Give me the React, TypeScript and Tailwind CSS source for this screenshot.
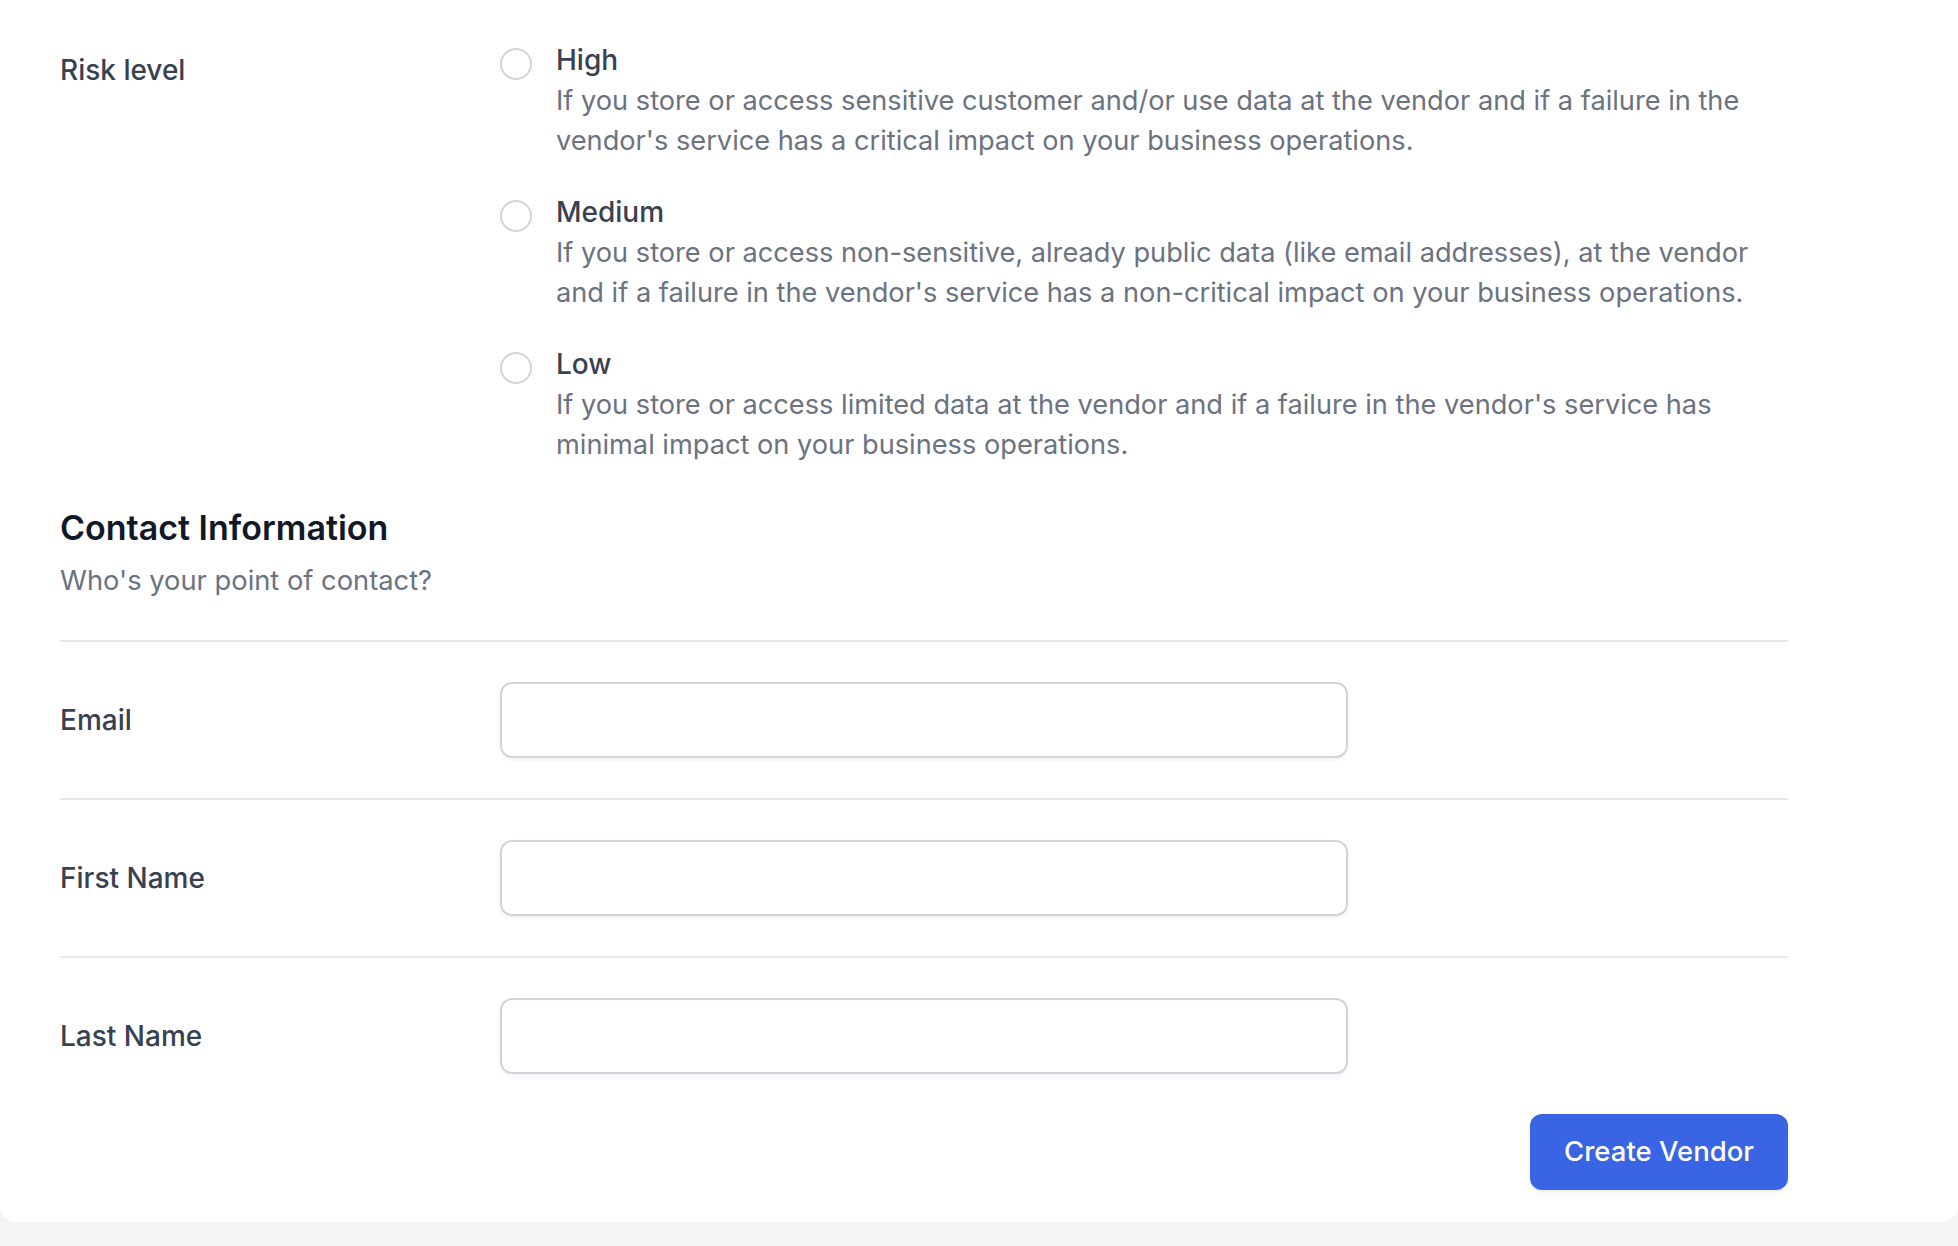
import React from "react";

const options = [
  {
    title: "High",
    desc: "If you store or access sensitive customer and/or use data at the vendor and if a failure in the vendor's service has a critical impact on your business operations.",
  },
  {
    title: "Medium",
    desc: "If you store or access non-sensitive, already public data (like email addresses), at the vendor and if a failure in the vendor's service has a non-critical impact on your business operations.",
  },
  {
    title: "Low",
    desc: "If you store or access limited data at the vendor and if a failure in the vendor's service has minimal impact on your business operations.",
  },
];

function Field({ label, border }: { label: string; border: boolean }) {
  return (
    <div className={`flex items-center py-[40px] ${border ? "border-b-2 border-[#e5e7eb]" : ""}`}>
      <label className="w-[440px] shrink-0 text-[28px] leading-[40px] font-medium text-[#374151]">{label}</label>
      <input
        type="text"
        className="w-[848px] h-[76px] rounded-[12px] border-2 border-[#d1d5db] bg-white shadow-[0_2px_4px_rgba(0,0,0,0.05)] outline-none"
      />
    </div>
  );
}

export default function App() {
  return (
    <div className="min-h-[1246px] bg-[#f3f4f6] font-['Inter',sans-serif]">
      <div className="bg-white rounded-b-[16px] pl-[60px] pr-[170px] pt-[40px] pb-[32px]">
        <div className="flex">
          <div className="w-[440px] shrink-0 pt-[10px] text-[28px] leading-[40px] font-medium text-[#374151]">Risk level</div>
          <div className="flex-1 flex flex-col gap-[32px]">
            {options.map((o) => (
              <div key={o.title} className="flex items-start">
                <span className="mt-[8px] w-[32px] h-[32px] shrink-0 rounded-full border-2 border-[#d1d5db] bg-white" />
                <div className="ml-[24px]">
                  <div className="text-[28px] leading-[40px] font-medium text-[#374151]">{o.title}</div>
                  <p className="pt-[1px] -mb-[1px] text-[27.2px] leading-[40px] text-[#6b7280]">{o.desc}</p>
                </div>
              </div>
            ))}
          </div>
        </div>

        <div className="pt-[36px] pb-[39px] border-b-2 border-[#e5e7eb]">
          <h2 className="text-[34px] leading-[56px] font-semibold text-[#111827]">Contact Information</h2>
          <p className="mt-[5px] text-[27.3px] leading-[40px] text-[#6b7280]">Who's your point of contact?</p>
        </div>

        <Field label="Email" border />
        <Field label="First Name" border />
        <Field label="Last Name" border={false} />

        <div className="flex justify-end">
          <button className="h-[76px] w-[258px] rounded-[12px] bg-[#3964e4] text-white text-[27.5px] font-medium shadow-[0_2px_4px_rgba(0,0,0,0.08)]">
            Create Vendor
          </button>
        </div>
      </div>
    </div>
  );
}
